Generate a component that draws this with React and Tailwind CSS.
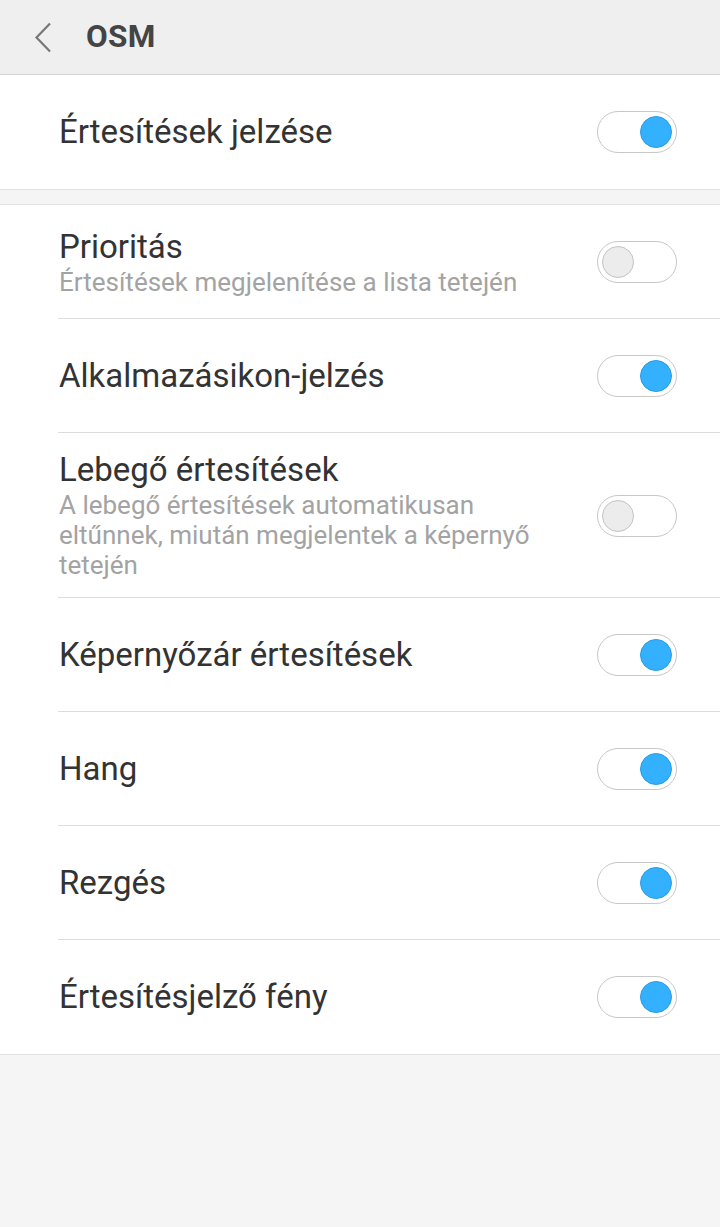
import React from "react";

function Toggle({ on }) {
  return (
    <div className="w-[80px] h-[42px] rounded-full border border-[#c8c8c8] bg-white flex items-center px-[4px] shrink-0"
      style={{ justifyContent: on ? "flex-end" : "flex-start" }}>
      {on ? (
        <div className="w-[32px] h-[32px] rounded-full bg-[#33b1ff] border border-[#2a9be6]" />
      ) : (
        <div className="w-[32px] h-[32px] rounded-full bg-[#ececec] border border-[#c4c4c4]" />
      )}
    </div>
  );
}

function Row({ title, subtitle, on, last, tall }) {
  return (
    <div className={`flex items-center pl-[59px] pr-[43px] ${tall ? "h-[165px]" : "h-[114px]"} relative`}>
      <div className="flex-1 min-w-0 pr-[48px]">
        <div className="text-[33px] leading-[38px] text-[#333333]">{title}</div>
        {subtitle && (
          <div className="text-[26px] leading-[30px] text-[#a3a3a3] mt-[1px]">{subtitle}</div>
        )}
      </div>
      <Toggle on={on} />
      {!last && <div className="absolute left-[58px] right-0 bottom-0 h-px bg-[#dddddd]" />}
    </div>
  );
}

export default function App() {
  return (
    <div className="w-[720px] h-[1227px] bg-[#f5f5f5] overflow-hidden" style={{ fontFamily: "Roboto, 'Noto Sans', sans-serif" }}>
      <div className="h-[75px] bg-[#efefef] border-b border-[#d4d4d4] flex items-center">
        <svg width="18" height="31" viewBox="0 0 18 31" className="ml-[34px] mr-[34px]">
          <path d="M16 1.5 L2.5 15.5 L16 29.5" fill="none" stroke="#777777" strokeWidth="2.2" />
        </svg>
        <div className="text-[31.5px] font-bold text-[#444444] tracking-[0.3px]">OSM</div>
      </div>
      <div className="bg-white border-b border-[#e2e2e2]">
        <div className="h-[114px] flex items-center pl-[59px] pr-[43px]">
          <div className="flex-1 text-[33px] text-[#333333]">Értesítések jelzése</div>
          <Toggle on />
        </div>
      </div>
      <div className="h-[14px]" />
      <div className="bg-white border-t border-b border-[#e2e2e2]">
        <Row title="Prioritás" subtitle="Értesítések megjelenítése a lista tetején" on={false} />
        <Row title="Alkalmazásikon-jelzés" on />
        <Row title="Lebegő értesítések" subtitle="A lebegő értesítések automatikusan eltűnnek, miután megjelentek a képernyő tetején" on={false} tall />
        <Row title="Képernyőzár értesítések" on />
        <Row title="Hang" on />
        <Row title="Rezgés" on />
        <Row title="Értesítésjelző fény" on last />
      </div>
    </div>
  );
}
